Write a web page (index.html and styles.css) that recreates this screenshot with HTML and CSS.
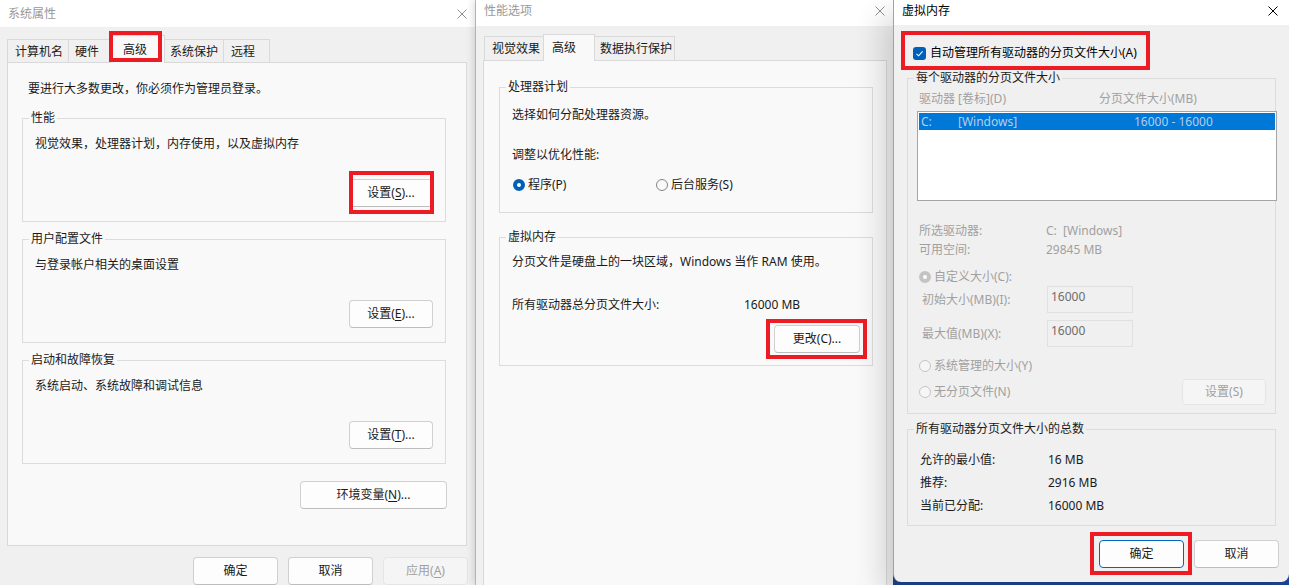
FILE: index.html
```html
<!DOCTYPE html>
<html lang="zh-CN">
<head>
  <meta charset="UTF-8" />
  <title>虚拟内存设置</title>
  <link rel="stylesheet" href="styles.css">
</head>
<body>
  <!-- 系统属性 -->
  <div class="win w1">
    <div class="titlebar">
      <span>系统属性</span>
      <svg class="close" viewBox="0 0 10 10"><path d="M0.5 0.5L9.5 9.5M9.5 0.5L0.5 9.5"/></svg>
    </div>
    <div class="body">
      <div class="tabs">
        <div class="tab">计算机名</div>
        <div class="tab">硬件</div>
        <div class="tab active mark mark-tab">高级</div>
        <div class="tab">系统保护</div>
        <div class="tab">远程</div>
      </div>
      <div class="panel">
        <p class="intro">要进行大多数更改，你必须作为管理员登录。</p>
        <fieldset class="group sys">
          <legend>性能</legend>
          <p>视觉效果，处理器计划，内存使用，以及虚拟内存</p>
          <button class="btn mark mark-perf">设置(<u>S</u>)...</button>
        </fieldset>
        <fieldset class="group sys">
          <legend>用户配置文件</legend>
          <p>与登录帐户相关的桌面设置</p>
          <button class="btn">设置(<u>E</u>)...</button>
        </fieldset>
        <fieldset class="group sys">
          <legend>启动和故障恢复</legend>
          <p>系统启动、系统故障和调试信息</p>
          <button class="btn">设置(<u>T</u>)...</button>
        </fieldset>
        <button class="btn env">环境变量(<u>N</u>)...</button>
      </div>
      <div class="actions">
        <button class="btn">确定</button>
        <button class="btn">取消</button>
        <button class="btn" disabled>应用(<u>A</u>)</button>
      </div>
    </div>
  </div>

  <!-- 性能选项 -->
  <div class="win w2">
    <div class="titlebar">
      <span>性能选项</span>
      <svg class="close" viewBox="0 0 10 10"><path d="M0.5 0.5L9.5 9.5M9.5 0.5L0.5 9.5"/></svg>
    </div>
    <div class="body">
      <div class="tabs">
        <div class="tab">视觉效果</div>
        <div class="tab active">高级</div>
        <div class="tab">数据执行保护</div>
      </div>
      <div class="panel">
        <fieldset class="group cpu">
          <legend>处理器计划</legend>
          <p>选择如何分配处理器资源。</p>
          <p class="tune">调整以优化性能:</p>
          <div class="radios">
            <label class="opt"><span class="radio on"></span>程序(P)</label>
            <label class="opt"><span class="radio"></span>后台服务(S)</label>
          </div>
        </fieldset>
        <fieldset class="group vm">
          <legend>虚拟内存</legend>
          <p>分页文件是硬盘上的一块区域，Windows 当作 RAM 使用。</p>
          <div class="kv total">
            <span class="k">所有驱动器总分页文件大小:</span>
            <span>16000 MB</span>
          </div>
          <button class="btn change mark mark-change">更改(C)...</button>
        </fieldset>
      </div>
    </div>
  </div>

  <!-- 虚拟内存 -->
  <div class="win w3">
    <div class="titlebar">
      <span>虚拟内存</span>
      <svg class="close" viewBox="0 0 10 10"><path d="M0.5 0.5L9.5 9.5M9.5 0.5L0.5 9.5"/></svg>
    </div>
    <div class="body">
      <div class="auto-box">
        <label class="auto">
          <span class="check"><svg viewBox="0 0 13 13"><path d="M3.5 6.8L5.6 8.8L9.6 4.4"/></svg></span>
          自动管理所有驱动器的分页文件大小(A)
        </label>
      </div>

      <fieldset class="group drives">
        <legend>每个驱动器的分页文件大小</legend>
        <div class="cols dim">
          <span class="c-drive">驱动器 [卷标](D)</span>
          <span>分页文件大小(MB)</span>
        </div>
        <div class="listbox">
          <div class="item sel">
            <span class="c1">C:</span>
            <span class="c2">[Windows]</span>
            <span>16000 - 16000</span>
          </div>
        </div>
        <div class="info dim">
          <div class="kv"><span class="k">所选驱动器:</span><span>C:&nbsp; [Windows]</span></div>
          <div class="kv"><span class="k">可用空间:</span><span>29845 MB</span></div>
        </div>
        <label class="opt dim custom"><span class="radio dis on"></span>自定义大小(C):</label>
        <div class="size-row dim first">
          <span class="k">初始大小(MB)(I):</span>
          <div class="field">16000</div>
        </div>
        <div class="size-row dim">
          <span class="k">最大值(MB)(X):</span>
          <div class="field">16000</div>
        </div>
        <label class="opt dim sysmanaged"><span class="radio dis"></span>系统管理的大小(Y)</label>
        <div class="nopage">
          <label class="opt dim"><span class="radio dis"></span>无分页文件(N)</label>
          <button class="btn set" disabled>设置(S)</button>
        </div>
      </fieldset>

      <fieldset class="group totals">
        <legend>所有驱动器分页文件大小的总数</legend>
        <div class="kv"><span class="k">允许的最小值:</span><span>16 MB</span></div>
        <div class="kv"><span class="k">推荐:</span><span>2916 MB</span></div>
        <div class="kv"><span class="k">当前已分配:</span><span>16000 MB</span></div>
      </fieldset>

      <div class="actions">
        <button class="btn default mark mark-ok">确定</button>
        <button class="btn">取消</button>
      </div>
    </div>
  </div>
</body>
</html>
```

FILE: styles.css
```css
* {
  box-sizing: border-box;
}
body {
  margin: 0;
  height: 585px;
  overflow: hidden;
  display: flex;
  align-items: flex-start;
  background: #1d4595;
  font-family: "Noto Sans", "Noto Sans CJK SC", sans-serif;
  font-size: 12px;
  line-height: 16px;
  color: #1a1a1a;
}
p {
  margin: 0;
}
u {
  text-underline-offset: 2px;
}

/* windows */
.win {
  position: relative;
  flex: none;
  display: flex;
  flex-direction: column;
  height: 585px;
  background: #f0f0f0;
}
.w1 {
  width: 476px;
  border-right: 1px solid #c4c4c4;
}
.w2 {
  width: 417px;
  box-shadow: -3px 0 7px rgba(0, 0, 0, 0.13);
}
.w3 {
  width: 396px;
  height: 582px;
  border-left: 1px solid #a2a2a2;
  border-radius: 0 0 8px 8px;
  box-shadow: -10px 14px 30px rgba(0, 0, 0, 0.16);
}

.titlebar {
  flex: none;
  height: 26px;
  padding: 0 8px 4px;
  display: flex;
  align-items: center;
  justify-content: space-between;
  background: #fff;
  color: #999;
}
.w1 .titlebar {
  height: 27px;
  padding-bottom: 0;
}
.w3 .titlebar {
  height: 25px;
  padding-right: 11px;
  color: #000;
}
.close {
  width: 10px;
  height: 10px;
  fill: none;
  stroke: currentColor;
  stroke-width: 1;
}
.w1 .close,
.w2 .close {
  stroke: #8e8e8e;
}

.body {
  flex: 1;
  display: flex;
  flex-direction: column;
}
.w1 .body {
  padding: 0 8px 0 7px;
}
.w2 .body {
  padding: 0 6px 0 7px;
}
.w3 .body {
  padding: 0 13px;
}

/* tabs */
.tabs {
  display: flex;
  align-items: flex-end;
  flex: none;
  margin-top: 8px;
}
.tab {
  height: 23px;
  line-height: 23px;
  padding-left: 6px;
  margin-right: -1px;
  border: 1px solid #d9d9d9;
  border-bottom: none;
  background: #f0f0f0;
  white-space: nowrap;
}
.tab.active {
  position: relative;
  z-index: 1;
  height: 28px;
  line-height: 27px;
  margin-bottom: -1px;
  background: #f9f9f9;
}
.w1 .tabs {
  height: 27px;
}
.w1 .tab:nth-child(1) { width: 62px; padding-left: 7px; }
.w1 .tab:nth-child(2) { width: 43px; }
.w1 .tab:nth-child(3) { width: 55px; padding-left: 12px; }
.w1 .tab:nth-child(4) { width: 60px; padding-left: 5px; }
.w1 .tab:nth-child(5) { width: 47px; padding-left: 7px; }

.w2 .tabs {
  height: 26px;
  margin-left: 1px;
}
.w2 .tab {
  height: 24px;
  line-height: 23px;
}
.w2 .tab.active {
  height: 27px;
  line-height: 25px;
}
.w2 .tab:nth-child(1) { width: 60px; padding-left: 7px; }
.w2 .tab:nth-child(2) { width: 52px; padding-left: 8px; }
.w2 .tab:nth-child(3) { width: 81px; padding-left: 5px; }

.panel {
  background: #f9f9f9;
  border: 1px solid #d9d9d9;
}
.w1 .panel {
  flex: none;
  height: 484px;
  padding: 18px 20px 0 14px;
}
.w2 .panel {
  flex: 1;
  border-bottom: none;
  padding: 18px 13px 0 15px;
}
.intro {
  margin-left: 6px;
}

/* group boxes */
.group {
  margin: 0;
  min-width: 0;
  padding: 0 12px;
  border: 1px solid #dcdcdc;
}
.group legend {
  padding: 0 2px;
  margin-left: -6px;
  line-height: 16px;
}
.group.sys {
  margin-top: 13px;
  padding-top: 10px;
  padding-bottom: 14px;
}
.group.sys + .group.sys {
  margin-top: 9px;
}
.group.sys .btn {
  display: block;
  margin: 27px 0 0 auto;
  width: 84px;
}
.btn.env {
  display: block;
  width: 147px;
  margin: 17px -1px 0 auto;
}

.group.cpu {
  padding-top: 12px;
  padding-bottom: 19px;
}
.tune {
  margin-top: 24px;
}
.radios {
  display: flex;
  margin-top: 14px;
}
.radios .opt:first-child {
  width: 143px;
  margin-left: 1px;
}
.group.vm {
  margin-top: 16px;
  padding-top: 9px;
  padding-bottom: 12px;
}
.kv {
  display: flex;
}
.kv.total {
  margin-top: 27px;
}
.kv.total .k {
  width: 232px;
}
.btn.change {
  display: block;
  width: 86px;
  margin: 12px 0 0 auto;
}

/* controls */
.btn {
  position: relative;
  height: 28px;
  padding: 0;
  font: inherit;
  line-height: 26px;
  color: #1a1a1a;
  text-align: center;
  background: #fdfdfd;
  border: 1px solid #d0d0d0;
  border-bottom-color: #bdbdbd;
  border-radius: 4px;
}
.btn:disabled {
  color: #a0a0a0;
  background: #f5f5f5;
  border-color: #e5e5e5;
}
.btn.default {
  border-color: #0067c0;
}
.actions {
  display: flex;
  justify-content: flex-end;
  gap: 10px;
  flex: none;
}
.actions .btn {
  width: 85px;
}
.w1 .actions {
  margin: 11px -1px 0 0;
}
.w3 .actions {
  margin: 14px -3px 0 0;
}

.opt {
  display: flex;
  align-items: center;
  gap: 3px;
  white-space: nowrap;
}
.radio {
  flex: none;
  width: 12px;
  height: 12px;
  border-radius: 50%;
  border: 1px solid #858585;
  background: #f9f9f9;
}
.radio.on {
  border: 4px solid #005fb8;
  background: #fff;
}
.radio.dis {
  border-color: #c4c4c4;
  background: #f6f6f6;
}
.radio.dis.on {
  border: 4px solid #c4c4c4;
  background: #fff;
}
.dim {
  color: #a0a0a0;
}

/* red annotation boxes */
.mark {
  position: relative;
}
.mark::after {
  content: "";
  position: absolute;
  border: 4px solid #ed1c24;
  pointer-events: none;
}
.mark-tab::after {
  top: -5px;
  right: 2px;
  bottom: 1px;
  left: -2px;
}
.mark-perf::after {
  top: -9px;
  right: -2px;
  bottom: -8px;
  left: -1px;
}
.mark-change::after {
  top: -7px;
  right: -8px;
  bottom: -7px;
  left: -9px;
}
.mark-ok::after {
  top: -9px;
  right: -9px;
  bottom: -8px;
  left: -10px;
}

/* 虚拟内存 window */
.auto-box {
  flex: none;
  width: 249px;
  height: 39px;
  margin: 6px 0 0 -6px;
  padding: 10px 0 0 8px;
  border: 4px solid #ed1c24;
}
.auto {
  display: flex;
  align-items: center;
  gap: 4px;
  color: #000;
  white-space: nowrap;
}
.check {
  flex: none;
  width: 13px;
  height: 13px;
  border-radius: 3px;
  background: #005fb8;
}
.check svg {
  display: block;
  width: 13px;
  height: 13px;
  fill: none;
  stroke: #fff;
  stroke-width: 1.1;
}
.group.drives {
  margin-top: 0;
  padding-top: 5px;
  padding-bottom: 8px;
}
.cols {
  display: flex;
  margin-left: -1px;
}
.c-drive {
  width: 180px;
}
.listbox {
  width: 360px;
  height: 90px;
  margin: 4px 0 0 -3px;
  padding: 1px;
  background: #fff;
  border: 1px solid #a5a5a5;
}
.item {
  display: flex;
  height: 17px;
  line-height: 17px;
  padding-left: 2px;
}
.item.sel {
  background: #0078d7;
  color: #b8cde8;
}
.item .c1 {
  width: 37px;
}
.item .c2 {
  width: 176px;
}
.info {
  margin-top: 22px;
  margin-left: -1px;
}
.info .kv + .kv {
  margin-top: 3px;
}
.info .k {
  width: 127px;
}
.custom {
  margin: 11px 0 0 -1px;
}
.size-row {
  display: flex;
  align-items: center;
  margin-top: 7px;
  padding-left: 2px;
}
.size-row.first {
  margin-top: 1px;
}
.size-row .k {
  width: 125px;
}
.field {
  width: 86px;
  height: 27px;
  padding: 2px 3px;
  color: #6d6d6d;
  background: #f0f0f0;
  border: 1px solid #e0e0e0;
}
.sysmanaged {
  margin: 11px 0 0 -1px;
}
.nopage {
  display: flex;
  align-items: center;
  justify-content: space-between;
  margin: 5px -3px 0 -1px;
}
.btn.set {
  width: 84px;
  height: 26px;
  line-height: 24px;
}
.group.totals {
  margin-top: 7px;
  padding-top: 15px;
  padding-bottom: 11px;
}
.totals .kv + .kv {
  margin-top: 7px;
}
.totals .k {
  width: 128px;
}
```
